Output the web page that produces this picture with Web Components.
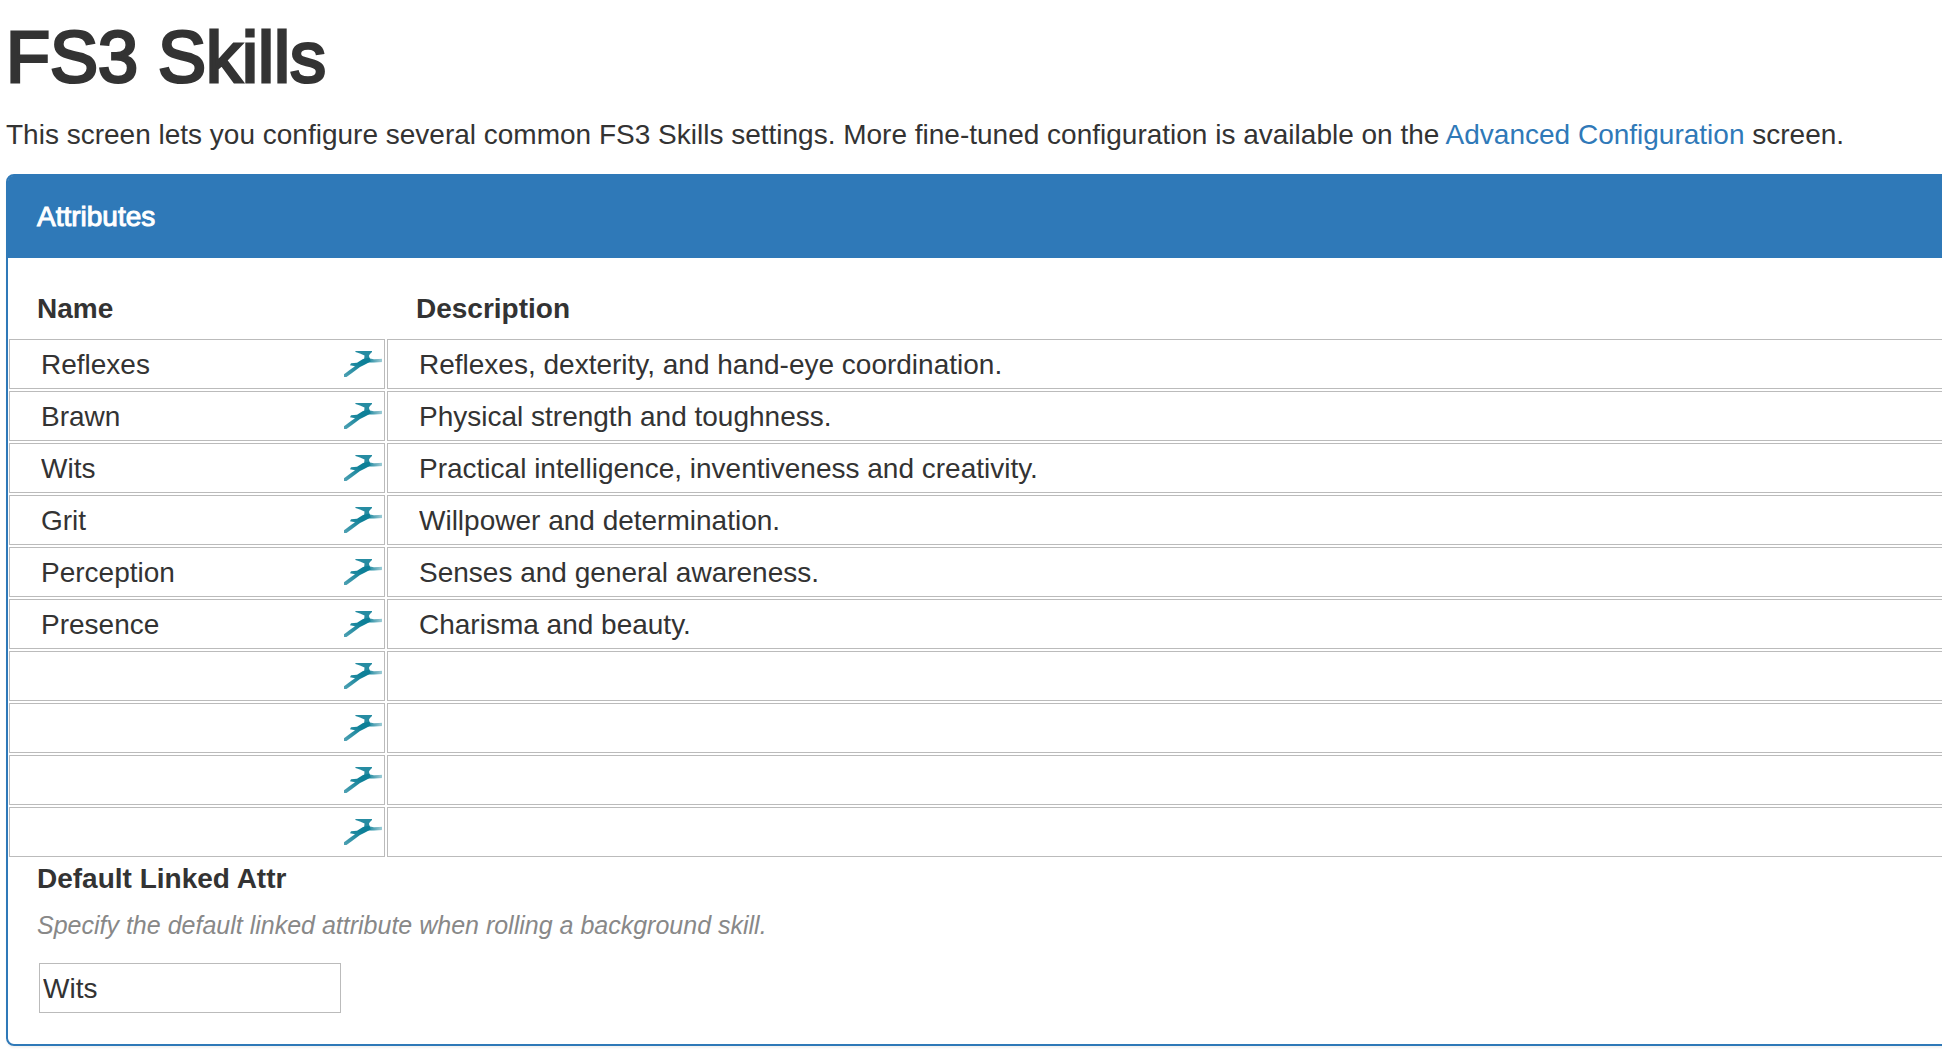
<!DOCTYPE html>
<html lang="en">
<head>
<meta charset="utf-8">
<title>FS3 Skills</title>
<style>
  html { overflow: hidden; background: #fff; }
  body {
    margin: 0;
    padding: 18px 0 4px 6px;
    font: 28px/40px "Liberation Sans", Arial, sans-serif;
    color: #333;
    --accent: #2f79b8;
    --line: #bbb;
    --gutter: 29px;
  }
</style>
</head>
<body>
<config-page>
  <span slot="title">FS3 Skills</span>
  <config-panel heading="Attributes">
    <attribute-table></attribute-table>
    <default-field label="Default Linked Attr" hint="Specify the default linked attribute when rolling a background skill." value="Wits"></default-field>
  </config-panel>
</config-page>

<script>
class ConfigPage extends HTMLElement {
  constructor() {
    super();
    this.attachShadow({ mode: 'open' }).innerHTML = `
      <style>
        :host { display: block; }
        h1 { margin: 0 0 18px; font-size: 72px; line-height: 79px; font-weight: 400; -webkit-text-stroke: 3px currentColor; }
        p { margin: 0 0 19px; }
        a { color: var(--accent); text-decoration: none; }
      </style>
      <h1><slot name="title"></slot></h1>
      <p>This screen lets you configure several common FS3 Skills settings. More fine-tuned configuration is available on the <a href="#advanced">Advanced Configuration</a> screen.</p>
      <slot></slot>`;
  }
}

class ConfigPanel extends HTMLElement {
  constructor() {
    super();
    this.attachShadow({ mode: 'open' }).innerHTML = `
      <style>
        :host {
          display: block; margin-right: -30px;
          border: 2px solid var(--accent); border-radius: 8px;
          box-shadow: 0 2px 2px rgba(0,0,0,.05);
        }
        header { background: var(--accent); color: #fff; padding: 21px var(--gutter); border-radius: 5px 5px 0 0; -webkit-text-stroke: 1px currentColor; }
        .body { padding: 31px 0; }
      </style>
      <header></header>
      <div class="body"><slot></slot></div>`;
  }
  connectedCallback() {
    this.shadowRoot.querySelector('header').textContent = this.getAttribute('heading');
  }
}

/* Teal fill-in marker shown at the end of a name field */
class FieldMark extends HTMLElement {
  constructor() {
    super();
    this.attachShadow({ mode: 'open' }).innerHTML = `
      <style>
        :host { display: block; width: 38px; height: 26px; flex: none; }
        svg { display: block; }
      </style>
      <svg width="38" height="26" viewBox="0 0 38 26" aria-hidden="true">
        <defs>
          <linearGradient id="arm"><stop offset="0" stop-color="#0f8098"/><stop offset="1" stop-color="#0f8098" stop-opacity=".35"/></linearGradient>
          <linearGradient id="leg" x1="1" y1="0" x2="0" y2="1"><stop offset=".3" stop-color="#0f8098"/><stop offset="1" stop-color="#0f8098" stop-opacity=".7"/></linearGradient>
          <filter id="soft" x="-10%" y="-10%" width="120%" height="120%"><feGaussianBlur stdDeviation=".7"/></filter>
        </defs>
        <g filter="url(#soft)">
          <path d="M11 -2H28V1L26 3 25 4.500 25.500 8 20 9.500 20.500 4.500 16 2.500 11.500 1Z" fill="#0f8098" fill-opacity=".9"/>
          <path d="M23 7 30 8.200 39 7.800V11L30 11.500 23 11.500Z" fill="url(#arm)"/>
          <path d="M25.500 6.500 26.500 10.500 22 13 16 16 8 22 -1 28.500V24L7 18 11 15.200 6 14.200 7 12.200 13 11.800 19 8Z" fill="url(#leg)"/>
        </g>
      </svg>`;
  }
}

class AttributeTable extends HTMLElement {
  constructor() {
    super();
    const rows = [
      ['Reflexes', 'Reflexes, dexterity, and hand-eye coordination.'],
      ['Brawn', 'Physical strength and toughness.'],
      ['Wits', 'Practical intelligence, inventiveness and creativity.'],
      ['Grit', 'Willpower and determination.'],
      ['Perception', 'Senses and general awareness.'],
      ['Presence', 'Charisma and beauty.'],
      ['', ''], ['', ''], ['', ''], ['', '']
    ];
    this.attachShadow({ mode: 'open' }).innerHTML = `
      <style>
        :host { display: block; }
        table { width: 100%; table-layout: fixed; border-collapse: collapse; }
        th { padding: 0 var(--gutter) 10px; text-align: left; font-weight: 700; }
        th:first-child { width: 378px; box-sizing: border-box; }
        th:last-child { padding-left: 30px; }
        td { padding: 0 1px 2px; }
        tr:last-child td { padding-bottom: 0; }
        .field { display: flex; align-items: center; height: 50px; box-sizing: border-box; border: 1px solid var(--line); padding-right: 2px; background: #fff; }
        input { flex: 1; min-width: 0; height: 100%; box-sizing: border-box; border: 0; outline: 0; background: none; padding: 2px 0 0 31px; font: inherit; color: inherit; }
      </style>
      <table>
        <thead><tr><th id="name" scope="col">Name</th><th id="desc" scope="col">Description</th></tr></thead>
        <tbody>${rows.map(([n, d]) => `
          <tr>
            <td><div class="field"><input type="text" aria-labelledby="name" value="${n}"><field-mark></field-mark></div></td>
            <td><div class="field"><input type="text" aria-labelledby="desc" value="${d}"></div></td>
          </tr>`).join('')}
        </tbody>
      </table>`;
  }
}

class DefaultField extends HTMLElement {
  constructor() {
    super();
    this.attachShadow({ mode: 'open' }).innerHTML = `
      <style>
        :host { display: block; padding: 2px var(--gutter) 0; }
        label { display: block; font-weight: 700; }
        p { margin: 6px 0 18px; font-size: 25px; font-style: italic; color: #888; }
        input { display: block; box-sizing: border-box; width: 302px; height: 50px; margin: 0 2px; padding: 2px 3px 0; border: 1px solid var(--line); background: #fff; font: inherit; color: inherit; }
      </style>
      <label for="value"></label>
      <p id="hint"></p>
      <input id="value" type="text" aria-describedby="hint">`;
  }
  connectedCallback() {
    const root = this.shadowRoot;
    root.querySelector('label').textContent = this.getAttribute('label');
    root.querySelector('p').textContent = this.getAttribute('hint');
    root.querySelector('input').value = this.getAttribute('value');
  }
}

customElements.define('field-mark', FieldMark);
customElements.define('attribute-table', AttributeTable);
customElements.define('default-field', DefaultField);
customElements.define('config-panel', ConfigPanel);
customElements.define('config-page', ConfigPage);
</script>
</body>
</html>
